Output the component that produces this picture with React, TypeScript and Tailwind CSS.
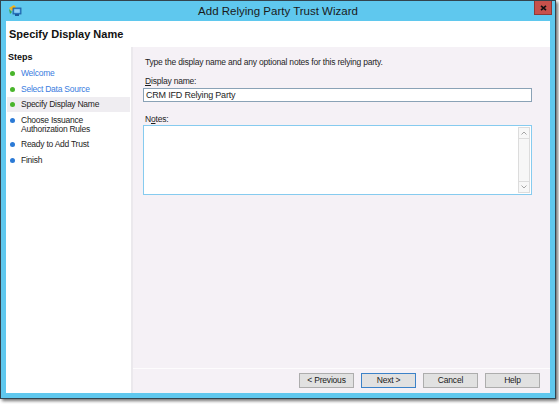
import React from 'react';

type Step = { label: string[]; done: boolean; current?: boolean };

const STEPS: Step[] = [
  { label: ['Welcome'], done: true },
  { label: ['Select Data Source'], done: true },
  { label: ['Specify Display Name'], done: true, current: true },
  { label: ['Choose Issuance', 'Authorization Rules'], done: false },
  { label: ['Ready to Add Trust'], done: false },
  { label: ['Finish'], done: false },
];

const AppIcon = () => (
  <svg width="14" height="13" viewBox="0 0 14 13">
    <path d="M1 4 L6 1 L8 3 L4 7 Z" fill="#f2b51c" />
    <path d="M1 5 L4 8 L2 10 Z" fill="#3aa845" />
    <rect x="5" y="4" width="8" height="6" fill="#2f86d6" stroke="#1c5a9c" strokeWidth="0.8" />
    <rect x="6.2" y="5.2" width="5.6" height="3.6" fill="#8fd0f5" />
    <rect x="7" y="10" width="4" height="2" fill="#1c5a9c" />
  </svg>
);

const WizButton = ({ label, primary }: { label: string; primary?: boolean }) => (
  <button
    className={`w-[55px] h-[15px] bg-[#e1e1e1] text-[8.5px] tracking-[-0.2px] leading-none text-[#1a1a1a] border ${
      primary ? 'border-[#3c82c8]' : 'border-[#adadad]'
    }`}
  >
    {label}
  </button>
);

export default function App() {
  return (
    <div className="w-[559px] h-[404px] bg-white font-['Liberation_Sans',Arial,sans-serif] text-[#1e1e1e]">
      <div className="w-[556px] h-[399px] bg-[#5fc8ee] border border-[#33444e] shadow-[2px_2px_3px_rgba(0,0,0,0.55)] flex flex-col">
        {/* title bar */}
        <div className="h-[20px] flex items-start shrink-0">
          <div className="w-[21px] pl-[7px] pt-[3px]">
            <AppIcon />
          </div>
          <div className="flex-1 text-center text-[11.5px] leading-[20px] text-[#1a1a1a]">
            Add Relying Party Trust Wizard
          </div>
          <div className="w-[21px] flex">
            <div className="w-[18px] h-[14px] bg-[#c7514b] border border-[#8e3a36] border-t-0 flex items-center justify-center">
              <svg width="7" height="6" viewBox="0 0 7 6">
                <path d="M1 0.8 L6 5.2 M6 0.8 L1 5.2" stroke="#111" strokeWidth="1.6" />
              </svg>
            </div>
          </div>
        </div>

        {/* client area */}
        <div className="mx-[5px] mb-[5px] flex-1 flex flex-col bg-white">
          <div className="h-[26px] flex items-center px-[3px] shrink-0">
            <h1 className="font-bold text-[11px] text-[#111]">Specify Display Name</h1>
          </div>

          <div className="flex flex-1">
            {/* steps */}
            <div className="w-[127px] bg-white border-r-2 border-[#ebe9ed] flex flex-col">
              <div className="pt-[4px] px-[2px] h-[18.75px] font-bold text-[9px] leading-[12px] text-[#111]">
                Steps
              </div>
              {STEPS.map((s) => (
                <div
                  key={s.label[0]}
                  className={`mx-[1px] flex items-start py-[3.25px] ${s.current ? 'bg-[#efedf1]' : ''}`}
                >
                  <span
                    className={`mt-[2px] ml-[3px] w-[5px] h-[5px] rounded-full shrink-0 ${
                      s.done ? 'bg-[#49b52c]' : 'bg-[#2b7ad6]'
                    }`}
                  />
                  <div
                    className={`ml-[6px] text-[8.5px] tracking-[-0.25px] leading-[9px] ${
                      s.done && !s.current ? 'text-[#3a7de0]' : 'text-[#1e1e1e]'
                    }`}
                  >
                    {s.label.map((l) => (
                      <div key={l}>{l}</div>
                    ))}
                  </div>
                </div>
              ))}
            </div>

            {/* page */}
            <div className="flex-1 bg-[#f5f1f6] flex flex-col">
              <div className="flex-1 pl-[10px] pr-[18px] pt-[9px] text-[8.5px] tracking-[-0.2px]">
                <p className="pl-[2px] leading-[12px]">
                  Type the display name and any optional notes for this relying party.
                </p>
                <div className="pl-[2px] mt-[8px] leading-[10px]">
                  <span className="underline">D</span>isplay name:
                </div>
                <div className="mt-[2px] h-[14px] bg-white border border-[#8aa2b6] pl-[2px] leading-[12px] text-[9px]">
                  CRM IFD Relying Party
                </div>
                <div className="pl-[2px] mt-[12px] leading-[10px]">
                  N<span className="underline">o</span>tes:
                </div>
                <div className="mt-[1px] h-[70px] bg-white border border-[#86cbef] flex justify-end">
                  <div className="w-[12px] my-[1px] mr-[1px] border border-[#dcdcdc] bg-[#f7f7f7] flex flex-col justify-between">
                    <div className="h-[11px] border-b border-[#dcdcdc] flex items-center justify-center">
                      <svg width="6" height="4" viewBox="0 0 6 4">
                        <path d="M0.5 3.5 L3 1 L5.5 3.5" fill="none" stroke="#9a9a9a" strokeWidth="0.9" />
                      </svg>
                    </div>
                    <div className="h-[11px] border-t border-[#dcdcdc] flex items-center justify-center">
                      <svg width="6" height="4" viewBox="0 0 6 4">
                        <path d="M0.5 0.5 L3 3 L5.5 0.5" fill="none" stroke="#9a9a9a" strokeWidth="0.9" />
                      </svg>
                    </div>
                  </div>
                </div>
              </div>

              <div className="h-[25px] border-t border-[#fdfcfd] flex items-start justify-end gap-[7px] pt-[4px] pr-[10px] shrink-0">
                <WizButton label="< Previous" />
                <WizButton label="Next >" primary />
                <WizButton label="Cancel" />
                <WizButton label="Help" />
              </div>
            </div>
          </div>
        </div>
      </div>
    </div>
  );
}
